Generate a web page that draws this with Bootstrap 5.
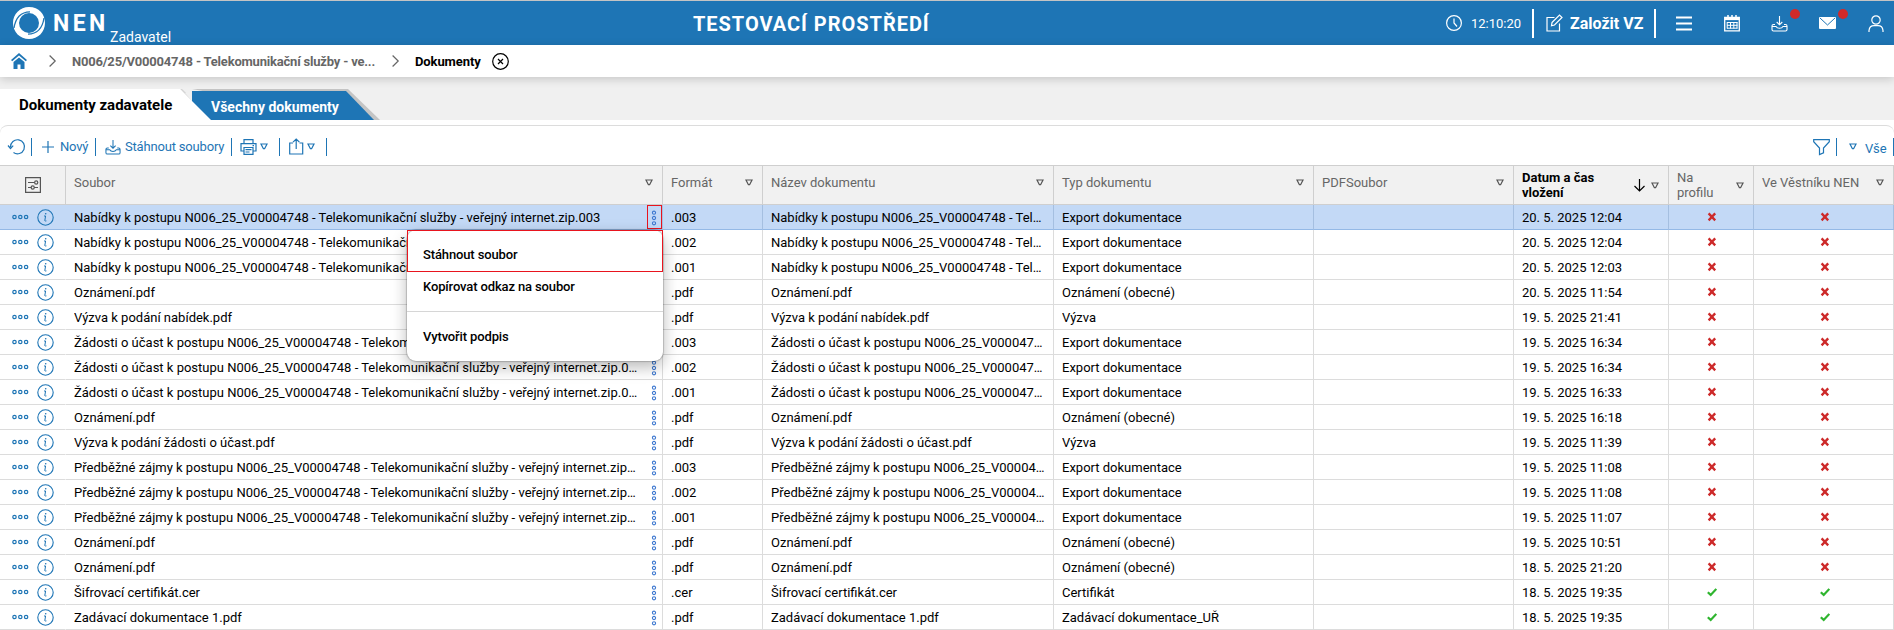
<!DOCTYPE html>
<html lang="cs">
<head>
<meta charset="utf-8">
<title>NEN – Dokumenty</title>
<meta name="viewport" content="width=device-width, initial-scale=1">
<link href="https://cdn.jsdelivr.net/npm/bootstrap@5.3.0/dist/css/bootstrap.min.css" rel="stylesheet">
<style>
  :root { --nen: #1e75b5; --line: #dcdcdc; }
  body { font-family: Roboto, "Liberation Sans", sans-serif; font-size: 13px; line-height: 16px; color: #000; background: #fff; overflow: hidden; }
  svg { display: block; flex: none; overflow: visible; }
  .ic { fill: none; stroke: currentColor; stroke-width: 1.2; }
  .topbar { height: 45px; background: var(--nen); border-top: 1px solid #c4c4c4; color: #fff; padding-left: 13px; }
  .brand { width: 680px; }
  .brand-name { font-size: 23px; font-weight: 700; letter-spacing: 3.4px; margin-left: 8px; width: 57px; padding-top: 2px; }
  .brand-role { font-size: 14px; margin-top: 27px; }
  .env-title { font-size: 20px; font-weight: 700; letter-spacing: .97px; width: 753px; padding-top: 1px; }
  .clock-text { margin-left: 9px; width: 61px; padding-top: 2px; }
  .vbar { width: 2px; height: 29px; background: #fff; flex: none; }
  .create { font-size: 16px; font-weight: 700; margin-left: 8px; width: 84px; padding-top: 2px; }
  .dot { width: 10px; height: 10px; border-radius: 50%; background: #d02a2a; top: -6px; right: -12px; }
  .crumbs { height: 32px; background: #fff; box-shadow: 0 2px 9px rgba(0,0,0,.18); padding-left: 11px; z-index: 2; font-weight: 700; }
  .crumb-link { color: #666; width: 303px; margin-left: 16px; white-space: nowrap; padding-top: 1px; letter-spacing: -.2px; }
  .tabstrip { height: 43px; background: #f0f0f0; padding-top: 12px; }
  .tab-shapes { position: absolute; left: 0; bottom: 0; }
  .tab-a { font-size: 15px; font-weight: 700; padding-left: 19px; width: 211px; height: 31px; line-height: 33px; }
  .tab-b { font-size: 14px; font-weight: 700; color: #fff; height: 31px; line-height: 36px; }
  .panel { height: 40px; margin-top: 5px; border-top: 1px solid var(--line); border-radius: 8px 8px 0 0; color: var(--nen); padding: 2px 0 0 8px; }
  .sep { width: 1px; height: 18px; background: var(--nen); flex: none; }
  .tool-text { font-size: 13px; letter-spacing: -.18px; padding-top: 1px; white-space: nowrap; }
  .grid-table { table-layout: fixed; width: 1894px; border-collapse: separate; border-spacing: 0; }
  .grid-table th { height: 40px; padding: 0 9px 0 8px; background: #f1f1f1; border: solid #cfcfcf; border-width: 1px 1px 1px 0; font-weight: 400; color: #666; vertical-align: middle; line-height: 15px; }
  .grid-table th.sorted { color: #000; font-weight: 700; }
  .grid-table td { height: 25px; padding: 0 8px; border: solid var(--line); border-width: 0 1px 1px 0; white-space: nowrap; overflow: hidden; vertical-align: middle; }
  .grid-table td > .txt, .file .txt { overflow: hidden; text-overflow: ellipsis; display: block; padding-top: 2px; }
  .grid-table td:first-child { border-right-color: transparent; padding: 0 0 0 12px; color: var(--nen); }
  .grid-table tr.picked td { background: #c3d9f6; border-right-color: #a5bfe0; border-bottom-color: #94b9e6; }
  .grid-table tr.picked td:first-child { border-right-color: #c3d9f6; }
  .grid-table td.file { padding-right: 0; }
  .file .txt { width: 564px; }
  .kebab { color: #3d78d0; width: 15px; height: 24px; padding: 1px 4px 0 4px; }
  .picked .kebab { box-shadow: inset 0 0 0 1px #e8141e; }
  .rowmenu { left: 407px; top: 230px; width: 256px; height: 131px; background: #fff; border-radius: 9px; box-shadow: 0 0 1px 1px rgba(0,0,0,.18), 0 6px 16px rgba(0,0,0,.28); z-index: 5; font-weight: 500; letter-spacing: -.13px; }
  .rowmenu a { display: flex; align-items: center; color: #000; text-decoration: none; padding-left: 16px; }
  .m-first { border: 1px solid #e8141e; height: 42px; padding: 8px 0 0 15px !important; }
  .m-second { height: 28px; padding-top: 2px; }
  .m-third { height: 50px; border-top: 1px solid #d6d6d6; margin-top: 11px; padding-top: 1px; }
</style>
</head>
<body>
<svg width="0" height="0" class="position-absolute">
  <symbol id="dots" viewBox="0 0 17 6"><g fill="none" stroke="currentColor" stroke-width="1.2"><circle cx="2.5" cy="3" r="1.7"/><circle cx="8.3" cy="3" r="1.7"/><circle cx="14.1" cy="3" r="1.7"/></g></symbol>
  <symbol id="info" viewBox="0 0 17 17"><circle cx="8.5" cy="8.5" r="7.7" fill="none" stroke="currentColor" stroke-width="1.1"/><path d="M7 7h1.6L7.8 11.5q0 .9 1.6.4" fill="none" stroke="currentColor"/><circle cx="8.7" cy="4.8" r=".8" fill="currentColor"/></symbol>
  <symbol id="kebab" viewBox="0 0 6 16"><g fill="none" stroke="currentColor" stroke-width="1.1"><circle cx="3" cy="2.7" r="1.6"/><circle cx="3" cy="8" r="1.6"/><circle cx="3" cy="13.3" r="1.6"/></g></symbol>
  <symbol id="tri" viewBox="0 0 8 7"><path d="M1 1h6L4.6 5.7H3.4z" fill="none" stroke="currentColor" stroke-width="1.2"/></symbol>
  <symbol id="no" viewBox="0 0 10 10"><path d="M1.6 1.4l6.6 7M8.2 1.4l-6.6 7" fill="none" stroke="#cd2a2a" stroke-width="2.3"/></symbol>
  <symbol id="yes" viewBox="0 0 10 10"><path d="M.8 5.2l2.9 2.7 5.6-6" fill="none" stroke="#2fb52f" stroke-width="2.2"/></symbol>
  <symbol id="load" viewBox="0 0 17 17"><path d="M8.5 1v8.500M5.700 7l2.800 2.800L11.300 7M4 9.500H2.500Q1 9.500 1 11v3.500Q1 16 2.500 16h12q1.500 0 1.500-1.500V11q0-1.500-1.500-1.500H13M1.500 11.500h3.500q1 1.800 3.500 1.800t3.500-1.800h3.500" fill="none" stroke="currentColor" stroke-width="1.100"/></symbol>
</svg>

<header class="topbar d-flex align-items-center">
  <div class="brand d-flex align-items-center h-100">
    <svg width="32" height="32" viewBox="0 0 32 32"><path fill="#fff" fill-rule="evenodd" d="M16 0C26 0 32 7 32 16s-7 16-16 16S0 25 0 16 7 0 16 0zM16 6a10 10 0 1 0 0 20 10 10 0 1 0 0-20z"/><path d="M1 21C2.500 11 8 5 17 4.800" fill="none" stroke="#1e75b5" stroke-width="1.300"/><path d="M31 11C29.500 21 24 27 15 27.200" fill="none" stroke="#1e75b5" stroke-width="1.300"/></svg>
    <div class="brand-name">NEN</div>
    <div class="brand-role">Zadavatel</div>
  </div>
  <div class="env-title">TESTOVACÍ PROSTŘEDÍ</div>
  <svg class="ic" width="16" height="16" viewBox="0 0 16 16"><circle cx="8" cy="8" r="7.400"/><path d="M8 3.500V8l3 3.500"/></svg>
  <div class="clock-text">12:10:20</div>
  <div class="vbar"></div>
  <svg class="ic ms-2 me-0" width="20" height="18" viewBox="-4 0 20 18"><path d="M8.500 3.500H1v13.500h12.500V9.500M6 8.500L13.500 1l2.500 2.500L8.500 11 5.500 11.800z"/></svg>
  <div class="create">Založit VZ</div>
  <div class="vbar"></div>
  <svg width="16" height="15" viewBox="0 0 16 15" style="margin-left:20px"><path d="M0 1.500h16M0 7.500h16M0 13.500h16" stroke="#fff" stroke-width="2"/></svg>
  <svg width="16" height="17" viewBox="0 0 16 17" style="margin-left:32px" fill="none" stroke="#fff"><path d="M.7 2.500h14.600v13.300H.7z" stroke-width="1.300"/><path d="M1 3.700h14" stroke-width="2.800"/><path d="M4 0v4M8 0v4M12 0v4" stroke-width="1.500"/><path d="M3 7.500h10.500M3 10.300h10.500M3 13.200h10.500M3.200 7v6.500M6.500 7v6.500M9.800 7v6.500M13 7v6.500"/></svg>
  <div class="position-relative" style="margin-left:31px"><svg width="17" height="17"><use href="#load"/></svg><span class="dot position-absolute"></span></div>
  <div class="position-relative" style="margin-left:31px"><svg width="17" height="12" viewBox="0 0 17 12"><rect width="17" height="12" rx="1" fill="#fff"/><path d="M1 1l7.500 7L16 1" fill="none" stroke="#1e75b5"/></svg><span class="dot position-absolute" style="top:-8px"></span></div>
  <svg class="ic" width="16" height="17" viewBox="0 0 16 17" style="margin-left:32px"><circle cx="8" cy="5" r="4.200"/><path d="M1 17v-1.500Q1.500 10.700 6 10.700h4q4.500 0 5 4.800V17"/></svg>
</header>

<nav class="crumbs d-flex align-items-center position-relative">
  <svg width="16" height="16" viewBox="0 0 16 16" fill="#1e75b5"><path d="M2.500 9L8 4.500 13.500 9v7h-4v-4.500h-3V16h-4z"/><path d="M.6 7.600L8 1.300l7.400 6.300" fill="none" stroke="#1e75b5" stroke-width="1.800"/></svg>
  <svg class="ic" width="7" height="12" viewBox="0 0 7 12" style="margin-left:22px;color:#666"><path d="M.6.500l5.600 5.500-5.600 5.500"/></svg>
  <div class="crumb-link">N006/25/V00004748 - Telekomunikační služby - ve...</div>
  <svg class="ic" width="7" height="12" viewBox="0 0 7 12" style="margin-left:17px;color:#666"><path d="M.6.500l5.600 5.500-5.600 5.500"/></svg>
  <div style="margin-left:16px;width:77px;padding-top:1px;letter-spacing:-.1px">Dokumenty</div>
  <svg class="ic" width="17" height="17" viewBox="0 0 17 17"><circle cx="8.500" cy="8.500" r="7.800"/><path d="M6 6l5 5M11 6l-5 5"/></svg>
</nav>

<div class="tabstrip d-flex position-relative">
  <svg class="tab-shapes" width="400" height="31" viewBox="0 89 400 31">
    <path d="M192 89h156l32 31h-20z" fill="#c4c4c4"/>
    <path d="M180 89h2l32 31h-6z" fill="#d4d4d4"/>
    <path d="M185 93l7-2v10z" fill="#f0f0f0"/>
    <path d="M192 91h154l28 29H192z" fill="#1e75b5"/>
    <path d="M0 89h180l31 31H0z" fill="#fff"/>
  </svg>
  <div class="tab-a position-relative">Dokumenty zadavatele</div>
  <div class="tab-b position-relative">Všechny dokumenty</div>
</div>

<div class="panel d-flex align-items-center">
  <svg class="ic" width="17" height="16" viewBox="0 0 17 16"><path d="M2.500 8A7 7 0 1 1 5.500 13.500M0 6.500l2.500 3 2.700-2.800"/></svg>
  <div class="sep" style="margin-left:6px"></div>
  <svg class="ic" width="12" height="12" viewBox="0 0 12 12" style="margin-left:10px"><path d="M6 0v12M0 6h12"/></svg>
  <div class="tool-text" style="margin-left:6px;width:35px">Nový</div>
  <div class="sep"></div>
  <svg width="16" height="16" style="margin-left:9px"><use href="#load"/></svg>
  <div class="tool-text" style="margin-left:4px;width:106px">Stáhnout soubory</div>
  <div class="sep"></div>
  <svg class="ic" width="17" height="16" viewBox="0 0 17 16" style="margin-left:8px"><path d="M4 4.500V.700h9v3.800M4 12H1V4.700h15V12h-3M4 8.500h9v6.800H4zM5.500 10.700h6M5.500 13h4M12.500 6.600h1.500"/></svg>
  <svg width="8" height="7" style="margin-left:3px"><use href="#tri"/></svg>
  <div class="sep" style="margin-left:11px"></div>
  <svg class="ic" width="15" height="17" viewBox="0 0 15 17" style="margin-left:9px"><path d="M4 5H.700v11h13V5H10.500M7.200 11V1M4 4.200L7.200 1l3.200 3.200"/></svg>
  <svg width="8" height="7" style="margin-left:3px"><use href="#tri"/></svg>
  <div class="sep" style="margin-left:11px"></div>
  <svg class="ic ms-auto" width="17" height="16" viewBox="0 0 17 16"><path d="M.700.700h15.600v2L10.500 9v4.800L6.500 15.500V9L.700 2.700z"/></svg>
  <div class="sep" style="margin-left:6px"></div>
  <svg width="8" height="7" style="margin-left:12px"><use href="#tri"/></svg>
  <div class="tool-text pt-1" style="margin-left:8px;width:28px">Vše</div>
  <div class="sep"></div>
</div>

<table class="grid-table">
  <colgroup><col style="width:66px"><col style="width:597px"><col style="width:100px"><col style="width:291px"><col style="width:260px"><col style="width:200px"><col style="width:155px"><col style="width:85px"><col style="width:140px"></colgroup>
  <thead><tr id="head"></tr></thead>
  <tbody id="rows"></tbody>
</table>

<div class="rowmenu position-absolute">
  <a class="m-first" href="#">Stáhnout soubor</a>
  <a class="m-second" href="#">Kopírovat odkaz na soubor</a>
  <a class="m-third" href="#">Vytvořit podpis</a>
</div>

<script>
  const use = (id, w, h, cls = '') => `<svg class="${cls}" width="${w}" height="${h}"><use href="#${id}"/></svg>`;
  const tri = use('tri', 8, 7);
  const heads = ['Soubor', 'Formát', 'Název dokumentu', 'Typ dokumentu', 'PDFSoubor', 'Datum a čas<br>vložení', 'Na<br>profilu', 'Ve Věstníku NEN'];
  const arrow = '<svg class="ic ms-auto" style="margin-right:6px" width="11" height="13" viewBox="0 0 11 13"><path d="M5.500 0v12M.500 7l5 5 5-5"/></svg>';
  document.getElementById('head').innerHTML =
    '<th style="padding-right:8px"><svg class="ic mx-auto" style="color:#555" width="16" height="16" viewBox="0 0 16 16"><path d="M.600.600h14.800v14.800H.600zM3 5.500h6.500M6.500 10.500H3M9 10.500h4"/><circle cx="11.200" cy="5.500" r="1.600"/><circle cx="7.700" cy="10.500" r="1.600"/></svg></th>' +
    heads.map((h, i) => {
      const two = h.includes('<br>');
      return `<th class="${i === 5 ? 'sorted' : ''}"><div class="d-flex align-items-center" style="padding-bottom:${two ? 0 : 5}px"><span>${h}</span>${i === 5 ? arrow : ''}<span class="${i === 5 ? '' : 'ms-auto'}" style="color:#555">${tri}</span></div></th>`;
    }).join('');
  const T = ' N006_25_V00004748 - Telekomunikační služby - veřejný internet.zip.';
  const E = 'Export dokumentace', O = 'Oznámení (obecné)';
  const data = [
    ['Nabídky k postupu' + T + '003', '.003', E, '20. 5. 2025 12:04', 0],
    ['Nabídky k postupu' + T + '002', '.002', E, '20. 5. 2025 12:04', 0],
    ['Nabídky k postupu' + T + '001', '.001', E, '20. 5. 2025 12:03', 0],
    ['Oznámení.pdf', '.pdf', O, '20. 5. 2025 11:54', 0],
    ['Výzva k podání nabídek.pdf', '.pdf', 'Výzva', '19. 5. 2025 21:41', 0],
    ['Žádosti o účast k postupu' + T + '003', '.003', E, '19. 5. 2025 16:34', 0],
    ['Žádosti o účast k postupu' + T + '002', '.002', E, '19. 5. 2025 16:34', 0],
    ['Žádosti o účast k postupu' + T + '001', '.001', E, '19. 5. 2025 16:33', 0],
    ['Oznámení.pdf', '.pdf', O, '19. 5. 2025 16:18', 0],
    ['Výzva k podání žádosti o účast.pdf', '.pdf', 'Výzva', '19. 5. 2025 11:39', 0],
    ['Předběžné zájmy k postupu' + T + '003', '.003', E, '19. 5. 2025 11:08', 0],
    ['Předběžné zájmy k postupu' + T + '002', '.002', E, '19. 5. 2025 11:08', 0],
    ['Předběžné zájmy k postupu' + T + '001', '.001', E, '19. 5. 2025 11:07', 0],
    ['Oznámení.pdf', '.pdf', O, '19. 5. 2025 10:51', 0],
    ['Oznámení.pdf', '.pdf', O, '18. 5. 2025 21:20', 0],
    ['Šifrovací certifikát.cer', '.cer', 'Certifikát', '18. 5. 2025 19:35', 1],
    ['Zadávací dokumentace 1.pdf', '.pdf', 'Zadávací dokumentace_UŘ', '18. 5. 2025 19:35', 1]
  ];
  document.getElementById('rows').innerHTML = data.map((r, i) => {
    const t = s => `<td><span class="txt">${s}</span></td>`;
    const m = `<td style="padding:0 7px 1px 9px">${use(r[4] ? 'yes' : 'no', 10, 10, 'mx-auto')}</td>`;
    return `<tr class="${i ? '' : 'picked'}"><td><div class="d-flex align-items-center">${use('dots', 17, 6)}<span style="width:8px"></span>${use('info', 17, 17)}</div></td>
      <td class="file"><div class="d-flex align-items-center"><span class="txt">${r[0]}</span><span class="kebab d-flex align-items-center ms-auto">${use('kebab', 6, 16)}</span></div></td>
      ${t(r[1])}${t(r[0])}${t(r[2])}<td></td>${t(r[3])}${m}${m}</tr>`;
  }).join('');
</script>
<script src="https://cdn.jsdelivr.net/npm/bootstrap@5.3.0/dist/js/bootstrap.bundle.min.js"></script>
</body>
</html>
